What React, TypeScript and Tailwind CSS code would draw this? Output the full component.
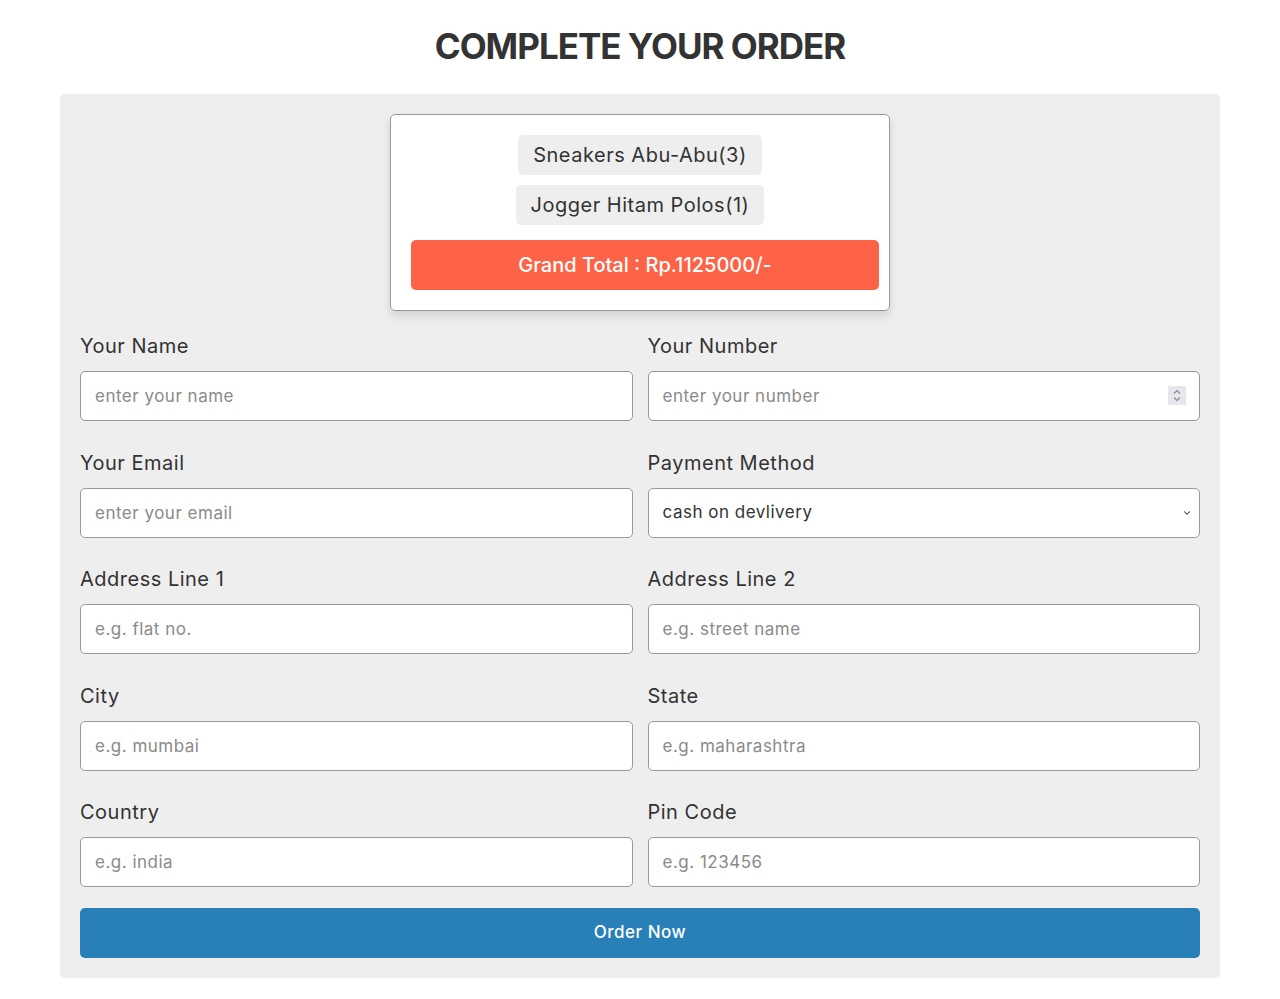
import { ChevronDown } from "lucide-react";

const font = { fontFamily: "Inter, 'Noto Sans', sans-serif" };

const items = ["Sneakers Abu-Abu(3)", "Jogger Hitam Polos(1)"];

const fields: { label: string; placeholder: string; type?: string }[] = [
  { label: "Your Name", placeholder: "enter your name" },
  { label: "Your Number", placeholder: "enter your number", type: "number" },
  { label: "Your Email", placeholder: "enter your email" },
  { label: "Payment Method", placeholder: "", type: "select" },
  { label: "Address Line 1", placeholder: "e.g. flat no." },
  { label: "Address Line 2", placeholder: "e.g. street name" },
  { label: "City", placeholder: "e.g. mumbai" },
  { label: "State", placeholder: "e.g. maharashtra" },
  { label: "Country", placeholder: "e.g. india" },
  { label: "Pin Code", placeholder: "e.g. 123456" },
];

function Field({ label, placeholder, type }: { label: string; placeholder: string; type?: string }) {
  return (
    <div className="flex flex-col">
      <span className="text-[20px] leading-[30px] text-[#333] mb-[10px]">{label}</span>
      {type === "select" ? (
        <div className="relative">
          <select className="w-full h-[50px] appearance-none bg-white border border-[#999] rounded-[5px] px-[14px] text-[17px] tracking-[0.5px] text-[#333] outline-none">
            <option>cash on devlivery</option>
            <option>credit card</option>
            <option>paypal</option>
          </select>
          <ChevronDown className="absolute right-[8px] top-[20px] text-[#333] pointer-events-none" size={10} strokeWidth={2.5} />
        </div>
      ) : (
        <div className="relative">
          <input
            type="text"
            placeholder={placeholder}
            className="w-full h-[50px] bg-white border border-[#999] rounded-[5px] px-[14px] text-[17px] tracking-[0.5px] text-[#333] placeholder:text-[#8a8a8a] outline-none"
          />
          {type === "number" && (
            <div className="absolute right-[14px] top-[15px] w-[18px] h-[19px] bg-[#e6e6ec] flex flex-col items-center justify-center pointer-events-none">
              <svg width="8" height="13" viewBox="0 0 8 13" fill="none" stroke="#8a8a96" strokeWidth="1.2">
                <path d="M1 4.5 L4 1.5 L7 4.5" />
                <path d="M1 8.5 L4 11.5 L7 8.5" />
              </svg>
            </div>
          )}
        </div>
      )}
    </div>
  );
}

export default function App() {
  return (
    <div style={font} className="min-h-screen bg-white pt-[22px] pb-[20px] tracking-[0.5px]">
      <h1 className="text-center text-[35px] leading-[48px] font-bold text-[#333] uppercase tracking-[-1px] mb-[24px]">
        Complete your order
      </h1>

      <div className="mx-[60px] bg-[#eee] rounded-[5px] p-[20px]">
        {/* order summary */}
        <div className="w-[500px] mx-auto bg-white border border-[#999] rounded-[5px] pt-[20px] pb-[20px] pl-[20px] shadow-[0_5px_10px_rgba(0,0,0,0.12)]">
          <div className="flex flex-col items-center gap-[10px] w-[458px]">
            {items.map((it) => (
              <span key={it} className="bg-[#eee] rounded-[5px] px-[15px] py-[5px] text-[20px] leading-[30px] text-[#333]">
                {it}
              </span>
            ))}
          </div>
          <div className="mt-[15px] w-[468px] h-[50px] bg-[#ff6347] rounded-[5px] flex items-center justify-center text-white text-[20px] font-medium tracking-normal">
            Grand Total : Rp.1125000/-
          </div>
        </div>

        <div className="grid grid-cols-2 gap-x-[15px] gap-y-[26.5px] mt-[20px]">
          {fields.map((f) => (
            <Field key={f.label} {...f} />
          ))}
        </div>

        <button className="mt-[21px] w-full h-[50px] bg-[#2980b9] rounded-[5px] text-white text-[17px] font-medium">
          Order Now
        </button>
      </div>
    </div>
  );
}
